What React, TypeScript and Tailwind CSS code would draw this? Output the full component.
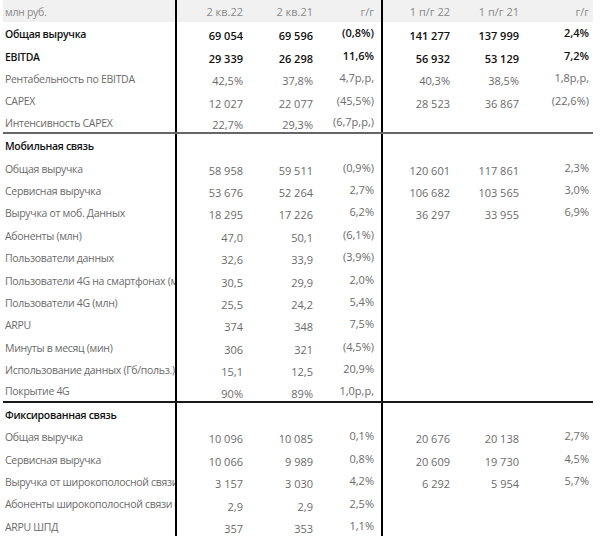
import React from 'react';

type Row = {
    kind: 'header' | 'bold' | 'normal' | 'section';
    cells: string[];
    line?: 'gray' | 'black';
};

const rows: Row[] = [
    { kind: 'header', cells: ['млн руб.', '2 кв.22', '2 кв.21', 'г/г', '1 п/г 22', '1 п/г 21', 'г/г'] },
    { kind: 'bold', cells: ['Общая выручка', '69 054', '69 596', '(0,8%)', '141 277', '137 999', '2,4%'] },
    { kind: 'bold', cells: ['EBITDA', '29 339', '26 298', '11,6%', '56 932', '53 129', '7,2%'] },
    { kind: 'normal', cells: ['Рентабельность по EBITDA', '42,5%', '37,8%', '4,7р,р,', '40,3%', '38,5%', '1,8р,р,'] },
    { kind: 'normal', cells: ['CAPEX', '12 027', '22 077', '(45,5%)', '28 523', '36 867', '(22,6%)'] },
    { kind: 'normal', cells: ['Интенсивность CAPEX', '22,7%', '29,3%', '(6,7р,р,)', '', '', ''], line: 'gray' },
    { kind: 'section', cells: ['Мобильная связь', '', '', '', '', '', ''] },
    { kind: 'normal', cells: ['Общая выручка', '58 958', '59 511', '(0,9%)', '120 601', '117 861', '2,3%'] },
    { kind: 'normal', cells: ['Сервисная выручка', '53 676', '52 264', '2,7%', '106 682', '103 565', '3,0%'] },
    { kind: 'normal', cells: ['Выручка от моб. Данных', '18 295', '17 226', '6,2%', '36 297', '33 955', '6,9%'] },
    { kind: 'normal', cells: ['Абоненты (млн)', '47,0', '50,1', '(6,1%)', '', '', ''] },
    { kind: 'normal', cells: ['Пользователи данных', '32,6', '33,9', '(3,9%)', '', '', ''] },
    { kind: 'normal', cells: ['Пользователи 4G на смартфонах (млн)', '30,5', '29,9', '2,0%', '', '', ''] },
    { kind: 'normal', cells: ['Пользователи 4G (млн)', '25,5', '24,2', '5,4%', '', '', ''] },
    { kind: 'normal', cells: ['ARPU', '374', '348', '7,5%', '', '', ''] },
    { kind: 'normal', cells: ['Минуты в месяц (мин)', '306', '321', '(4,5%)', '', '', ''] },
    { kind: 'normal', cells: ['Использование данных (Гб/польз.)', '15,1', '12,5', '20,9%', '', '', ''] },
    { kind: 'normal', cells: ['Покрытие 4G', '90%', '89%', '1,0р,р,', '', '', ''], line: 'black' },
    { kind: 'section', cells: ['Фиксированная связь', '', '', '', '', '', ''] },
    { kind: 'normal', cells: ['Общая выручка', '10 096', '10 085', '0,1%', '20 676', '20 138', '2,7%'] },
    { kind: 'normal', cells: ['Сервисная выручка', '10 066', '9 989', '0,8%', '20 609', '19 730', '4,5%'] },
    { kind: 'normal', cells: ['Выручка от широкополосной связи (млн руб.)', '3 157', '3 030', '4,2%', '6 292', '5 954', '5,7%'] },
    { kind: 'normal', cells: ['Абоненты широкополосной связи (млн)', '2,9', '2,9', '2,5%', '', '', ''] },
    { kind: 'normal', cells: ['ARPU ШПД', '357', '353', '1,1%', '', '', ''] },
];

// right padding per column, so the numbers end where they do in the report
const padRight = ['', 'pr-[7px]', 'pr-[5px]', 'pr-[7px]', 'pr-[5px]', 'pr-[4px]', 'pr-[4px]'];

const textClass = (kind: Row['kind']) => {
    if (kind === 'header') return 'text-[#8a8a8a]';
    if (kind === 'normal') return 'text-[#6b6b6b]';
    return 'text-[#111] font-semibold';
};

const App = () => {
    return (
        <div className="w-[600px] h-[536px] overflow-hidden bg-white pl-[3px] font-['Open_Sans',sans-serif] text-[11px]">
            <div className="w-[590px]">
                {rows.map((row, i) => {
                    const lineClass =
                        row.line === 'gray' ? 'border-b-2 border-[#666]' : row.line === 'black' ? 'border-b-2 border-[#1a1a1a]' : '';
                    const bg = row.kind === 'header' ? 'bg-[#f1f1f1]' : '';
                    return (
                        <div
                            key={i}
                            className={`grid grid-cols-[174px_73px_68px_65px_72px_68px_70px] h-[22.4px] box-border ${lineClass} ${bg} ${textClass(row.kind)}`}
                        >
                            {row.cells.map((cell, j) => {
                                let cls = 'flex items-center h-full whitespace-nowrap overflow-hidden';
                                if (j === 0) {
                                    // labels are set a little tighter, like the narrow font of the report
                                    cls += ' pl-[2px] border-r-2 border-black text-[10.5px] tracking-[-0.3px] pt-[3px]';
                                } else {
                                    cls += ' justify-end ' + padRight[j];
                                    if (j === 3) cls += ' border-r-2 border-black';
                                    if (row.kind === 'header') cls += ' pt-[3px]';
                                    else if (j === 3 || j === 6) cls += ' pt-0';
                                    else cls += ' pt-[6px]';
                                }
                                return (
                                    <div key={j} className={cls}>
                                        {cell}
                                    </div>
                                );
                            })}
                        </div>
                    );
                })}
            </div>
        </div>
    );
};

export default App;
